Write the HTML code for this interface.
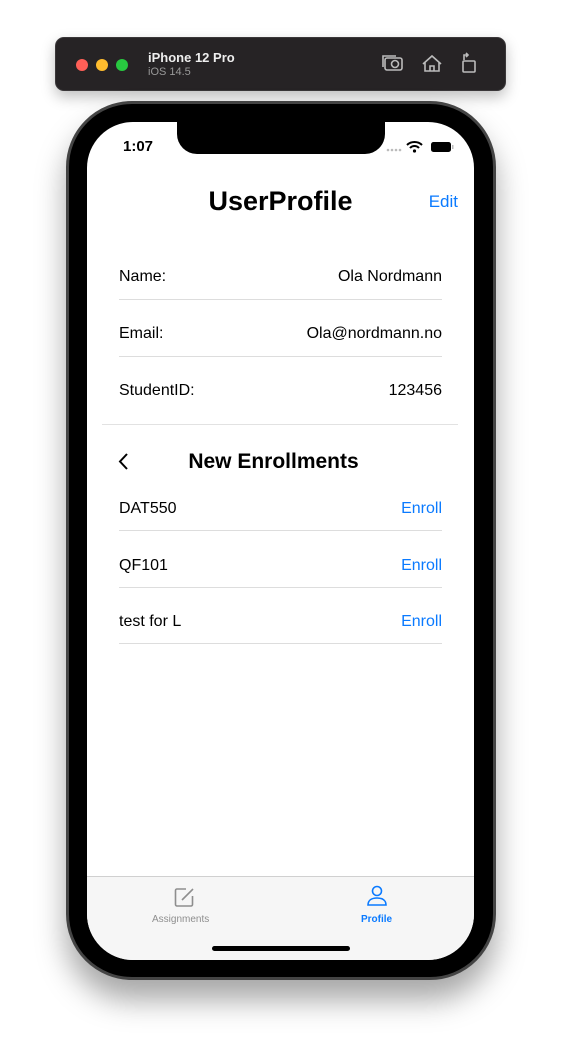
<!DOCTYPE html>
<html><head><style>
*{margin:0;padding:0;box-sizing:border-box}
body{width:561px;height:1055px;background:#fff;position:relative;overflow:hidden;font-family:"Liberation Sans",sans-serif}
.tb{position:absolute;left:55px;top:37px;width:451px;height:54px;background:#262325;border-radius:9px;box-shadow:0 6px 14px rgba(0,0,0,.25);border:1px solid #3a3739}
.dot{position:absolute;top:21px;width:12px;height:12px;border-radius:50%}
.phone{position:absolute;left:66px;top:101px;width:430px;height:879px;border-radius:66px;background:#000;border:3px solid #444;box-shadow:0 20px 30px rgba(0,0,0,.35)}
.screen{position:absolute;left:87px;top:122px;width:387px;height:838px;border-radius:46px;background:#fff;overflow:hidden}
.notch{position:absolute;left:90px;top:0;width:208px;height:32px;background:#000;border-radius:0 0 20px 20px}
.t{position:absolute;font-size:16px;color:#000}
.r{position:absolute;right:32px;font-size:16px}
.line{position:absolute;left:32px;right:32px;height:1px;background:#ddd}
.blue{color:#0a7aff}
</style></head><body>
<div class="tb">
<div class="dot" style="left:20px;background:#fe5f57"></div>
<div class="dot" style="left:40px;background:#febc2e"></div>
<div class="dot" style="left:60px;background:#28c840"></div>
<div style="position:absolute;left:92px;top:12px;color:#eee;font-weight:bold;font-size:13px">iPhone 12 Pro</div>
<div style="position:absolute;left:92px;top:28px;color:#999;font-size:11px">iOS 14.5</div>
<svg style="position:absolute;left:326px;top:14px" width="100" height="24" fill="none" stroke="#bbb" stroke-width="1.6">
<rect x="3" y="6" width="17" height="12" rx="2"/><circle cx="13" cy="12" r="3.5"/><path d="M1 15V4h13"/>
<path d="M41 12l9-8 9 8M43 10v9h14v-9M48 19v-5h4v5"/>
<rect x="81" y="9" width="12" height="11" rx="1"/><path d="M82 8V3h4M84 1l2 2-2 2"/>
</svg>
</div>
<div class="phone"></div>
<div class="screen">
<div class="notch"></div>
<div class="t" style="left:36px;top:16px;font-weight:bold;font-size:15px">1:07</div>
<svg style="position:absolute;left:298px;top:18px" width="70" height="14">
<g fill="#bbb"><circle cx="3" cy="10" r="1.3"/><circle cx="7" cy="10" r="1.3"/><circle cx="11" cy="10" r="1.3"/><circle cx="15" cy="10" r="1.3"/></g>
<path d="M22 5a11 11 0 0 1 15 0M25 8a6 6 0 0 1 9 0" stroke="#000" stroke-width="2" fill="none"/><circle cx="29.5" cy="11" r="1.6"/>
<rect x="46" y="2" width="20" height="10" rx="2.5" fill="#000"/><rect x="67" y="5" width="1.5" height="4" fill="#bbb"/>
</svg>
<div class="t" style="left:0;right:0;top:64px;text-align:center;font-weight:bold;font-size:27px">UserProfile</div>
<div class="r blue" style="top:70px;right:16px;font-size:17px">Edit</div>
<div class="t" style="left:32px;top:146px">Name:</div><div class="r" style="top:146px">Ola Nordmann</div>
<div class="line" style="top:177px"></div>
<div class="t" style="left:32px;top:203px">Email:</div><div class="r" style="top:203px">Ola@nordmann.no</div>
<div class="line" style="top:234px"></div>
<div class="t" style="left:32px;top:260px">StudentID:</div><div class="r" style="top:260px">123456</div>
<div style="position:absolute;left:15px;right:16px;top:302px;height:1px;background:#e2e2e2"></div>
<svg style="position:absolute;left:30px;top:330px" width="12" height="20"><path d="M10 2L3 9.5 10 17" stroke="#000" stroke-width="2" fill="none"/></svg>
<div class="t" style="left:-14px;right:0;top:328px;text-align:center;font-weight:bold;font-size:21px">New Enrollments</div>
<div class="t" style="left:32px;top:378px">DAT550</div><div class="r blue" style="top:378px">Enroll</div>
<div class="line" style="top:408px"></div>
<div class="t" style="left:32px;top:435px">QF101</div><div class="r blue" style="top:435px">Enroll</div>
<div class="line" style="top:465px"></div>
<div class="t" style="left:32px;top:491px">test for L</div><div class="r blue" style="top:491px">Enroll</div>
<div class="line" style="top:521px"></div>
<div style="position:absolute;left:0;right:0;top:754px;bottom:0;background:#f6f6f6;border-top:1px solid #d0d0d0">
<svg style="position:absolute;left:86px;top:9px" width="22" height="22" fill="none" stroke="#8e8e8e" stroke-width="1.6"><path d="M13 3H4a1.5 1.5 0 0 0-1.5 1.5v14A1.5 1.5 0 0 0 4 20h14a1.5 1.5 0 0 0 1.5-1.5V10"/><path d="M9 14l11-11"/></svg>
<div style="position:absolute;left:65px;top:37px;font-size:10px;color:#8e8e8e">Assignments</div>
<svg style="position:absolute;left:279px;top:8px" width="22" height="22" fill="none" stroke="#0a7aff" stroke-width="1.6"><circle cx="11" cy="6" r="4.5"/><path d="M2 20c0-5 4-7 9-7s9 2 9 7z"/></svg>
<div style="position:absolute;left:274px;top:37px;font-size:10px;color:#0a7aff;font-weight:bold">Profile</div>
<div style="position:absolute;left:125px;top:69px;width:138px;height:5px;border-radius:3px;background:#000"></div>
</div>
</div>
</body></html>
